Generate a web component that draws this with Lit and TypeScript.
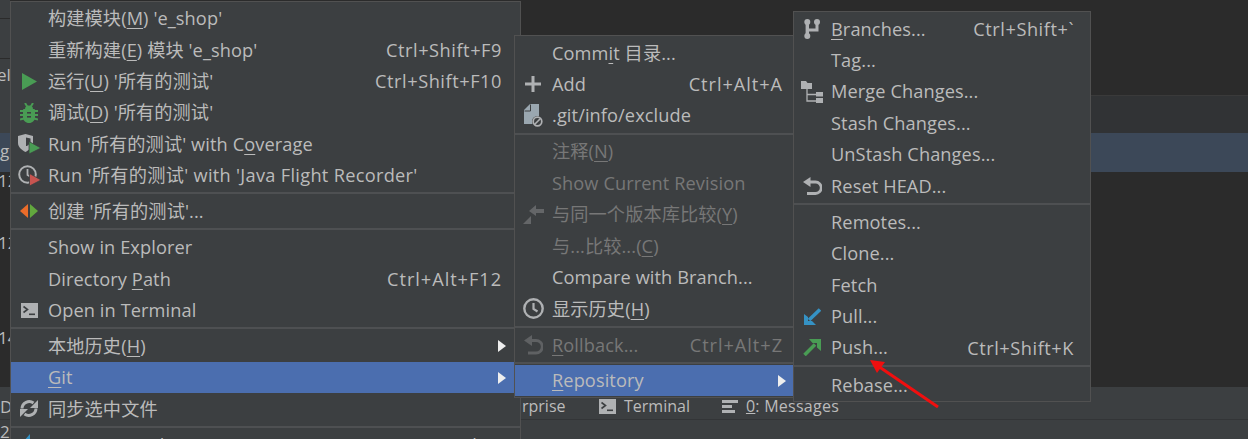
import { LitElement, html, css, svg } from "lit";
import { customElement } from "lit/decorators.js";

const G = "#afb1b3";
const D = "#3c3f41";

const ic: Record<string, [number, number, any]> = {
  run: [15, 17, svg`<path d="M0 0 L15 8.500 L0 17Z" fill="#499c54"/>`],
  bug: [18, 20, svg`<g stroke="#499c54" stroke-width="2" fill="none"><path d="M5 0l2.500 4M13 0l-2.500 4M0 8h18M0 12h18M0 16.500l4-1M18 16.500l-4-1"/></g><path d="M5 6a4 3.500 0 0 1 8 0z" fill="#499c54"/><rect x="3" y="6" width="12" height="10" rx="1" fill="#499c54"/><path d="M3 14h12c0 3.500-2.500 6-6 6s-6-2.500-6-6z" fill="#499c54"/><rect x="7" y="9" width="4" height="1.600" fill="${D}"/><rect x="7" y="13" width="4" height="1.600" fill="${D}"/>`],
  cov: [23, 20, svg`<path d="M0 2 L7.500 0 L15 2 V9 C15 13 11 16 7.500 18 C3.500 16 0 13 0 9Z" fill="${G}"/><path d="M8 3.500 L12.500 4.500 V9 L9 12 H8Z" fill="${D}"/><path d="M11 7.500 L23 14 L11 20Z" fill="#499c54" stroke="${D}" stroke-width=".8"/>`],
  jfr: [23, 21, svg`<circle cx="9.500" cy="9.500" r="8.300" fill="none" stroke="${G}" stroke-width="2"/><path d="M9.500 4v6l3.500 2" fill="none" stroke="${G}" stroke-width="1.800"/><path d="M11.500 8.500 L23 15 L11.500 21Z" fill="#c75450" stroke="${D}" stroke-width=".8"/>`],
  create: [18, 14, svg`<path d="M8 0 V14 L0 7Z" fill="#eb6c2a"/><path d="M10 0 V14 L18 7Z" fill="#62a83e"/>`],
  term: [17, 15, svg`<rect width="17" height="15" fill="${G}"/><path d="M2.500 3.500l4 3-4 3" fill="none" stroke="${D}" stroke-width="1.600"/><rect x="8" y="10.500" width="6" height="1.600" fill="${D}"/>`],
  sync: [18, 19, svg`<g fill="none" stroke="${G}" stroke-width="3"><path d="M2 9.500A7.200 7.200 0 0 1 13.500 4"/><path d="M16 9.500A7.200 7.200 0 0 1 4.500 15"/></g><path d="M18 1v8h-8z M0 18V10h8z" fill="${G}"/>`],
  plus: [16, 16, svg`<path d="M6.500 0h3v6.500H16v3H9.500V16h-3V9.500H0v-3h6.500z" fill="${G}"/>`],
  ignore: [19, 23, svg`<path d="M0 6L6 0H15V20H0Z" fill="#9aa7b0"/><path d="M6.500 0.500V7H0.500" fill="none" stroke="${D}" stroke-width="1"/><circle cx="13.500" cy="17.500" r="5.500" fill="${D}"/><circle cx="13.500" cy="17.500" r="4.300" fill="none" stroke="${G}" stroke-width="1.700"/><path d="M10.500 20.500l6-6" stroke="${G}" stroke-width="1.600"/>`],
  compare: [21, 19, svg`<g fill="#646668"><path d="M13 0 L6 6 L13 11 V8 H21 V4 H13Z"/><path d="M2 17 L8 11 V19 H0Z"/></g>`],
  clock: [21, 21, svg`<circle cx="10.500" cy="10.500" r="9.200" fill="none" stroke="${G}" stroke-width="2.400"/><path d="M10.500 5v6l4 2.500" fill="none" stroke="${G}" stroke-width="2.200"/>`],
  undoDis: [19, 20, svg`<path d="M6 5.500H12A6.200 6.200 0 0 1 12 18H4" fill="none" stroke="#5f6163" stroke-width="2.800"/><path d="M8 0V11L0 5.500z" fill="#5f6163"/>`],
  undo: [19, 18, svg`<path d="M6 5H12.500A5.300 5.300 0 0 1 12.500 16.500H4" fill="none" stroke="${G}" stroke-width="2.800"/><path d="M7.500 0V10L0 5z" fill="${G}"/>`],
  branch: [16, 20, svg`<g fill="${G}"><circle cx="3.300" cy="3" r="3"/><circle cx="3.300" cy="17" r="3"/><circle cx="13" cy="3" r="3"/><rect x="1.600" y="3" width="3.400" height="14"/><path d="M3 9.500h8.500V4h3v8.500H3z"/></g>`],
  merge: [22, 22, svg`<g fill="${G}"><path d="M0 0h5l1.500 2H11v6H0z"/><rect x="15" y="11" width="7" height="4.500"/><rect x="15" y="17" width="7" height="5"/></g><path d="M6 8V20H15M6 13.500H15" fill="none" stroke="${G}" stroke-width="1.300"/>`],
  pull: [17, 17, svg`<path d="M16 1.500L5 12" stroke="#3592c4" stroke-width="3.600"/><path d="M0 6 L4 9 V13 H8 L12 17 H0Z" fill="#3592c4"/>`],
  push: [18, 17, svg`<path d="M1.500 16L12 5.500" stroke="#499c54" stroke-width="3.600"/><path d="M6 0 H18 V12 L14 8.500 V4 H9.500Z" fill="#499c54"/>`],
  list: [16, 13, svg`<rect width="16" height="3" fill="${G}"/><rect y="5" width="10" height="3" fill="${G}"/><rect y="10" width="13" height="3" fill="${G}"/>`],
  cmp: [16, 22, svg`<path d="M9 0 V8 H2Z" fill="#3592c4"/>`],
};

const icon = (n: string) => {
  const [w, h, body] = ic[n];
  return html`<svg class="ic" width=${w} height=${h} viewBox="0 0 ${w} ${h}">${body}</svg>`;
};

type Item = { t?: any; k?: string; i?: string; sub?: boolean; dis?: boolean; sel?: boolean; sep?: boolean; tall?: boolean; wide?: boolean };
const u = (s: string) => html`<u>${s}</u>`;

const m1: Item[] = [
  { t: html`构建模块(${u("M")}) 'e_shop'` },
  { t: html`重新构建(${u("E")}) 模块 'e_shop'`, k: "Ctrl+Shift+F9" },
  { t: html`运行(${u("U")}) '所有的测试'`, k: "Ctrl+Shift+F10", i: "run" },
  { t: html`调试(${u("D")}) '所有的测试'`, i: "bug" },
  { t: html`Run '所有的测试' with C${u("o")}verage`, i: "cov" },
  { t: html`Run '所有的测试' with 'Java Flight Recorder'`, i: "jfr", wide: true },
  { sep: true },
  { t: html`创建 '所有的测试'...`, i: "create" },
  { sep: true },
  { t: "Show in Explorer" },
  { t: html`Directory ${u("P")}ath`, k: "Ctrl+Alt+F12" },
  { t: "Open in Terminal", i: "term" },
  { sep: true },
  { t: html`本地历史(${u("H")})`, sub: true },
  { t: html`${u("G")}it`, sub: true, sel: true },
  { t: "同步选中文件", i: "sync" },
  { sep: true },
  { t: "Compare With...", k: "Ctrl+D", i: "cmp" },
];
const m2: Item[] = [
  { t: html`Comm${u("i")}t 目录...` },
  { t: "Add", k: "Ctrl+Alt+A", i: "plus" },
  { t: ".git/info/exclude", i: "ignore" },
  { sep: true },
  { t: html`注释(${u("N")})`, dis: true },
  { t: "Show Current Revision", dis: true },
  { t: html`与同一个版本库比较(${u("Y")})`, dis: true, i: "compare" },
  { t: html`与...比较...(${u("C")})`, dis: true },
  { t: "Compare with Branch..." },
  { t: html`显示历史(${u("H")})`, i: "clock" },
  { sep: true },
  { t: html`${u("R")}ollback...`, k: "Ctrl+Alt+Z", dis: true, i: "undoDis" },
  { sep: true },
  { t: html`${u("R")}epository`, sub: true, sel: true },
];
const m3: Item[] = [
  { t: html`${u("B")}ranches...`, k: "Ctrl+Shift+\`", i: "branch" },
  { t: "Tag..." },
  { t: "Merge Changes...", i: "merge" },
  { t: "Stash Changes..." },
  { t: "UnStash Changes..." },
  { t: "Reset HEAD...", i: "undo" },
  { sep: true },
  { t: "Remotes..." },
  { t: "Clone..." },
  { t: "Fetch" },
  { t: "Pull...", i: "pull" },
  { t: "Push...", k: "Ctrl+Shift+K", i: "push" },
  { sep: true, tall: true },
  { t: "Rebase..." },
];

@customElement("app-root")
export class AppRoot extends LitElement {
  static styles = css`
    :host { display: block; position: relative; width: 1248px; height: 439px; overflow: hidden; background: #2b2b2b;
      font-family: "Open Sans", "Noto Sans CJK SC", sans-serif; color: #bbb; font-size: 18.200px; letter-spacing: .1px; }
    .bg { display: flex; flex-direction: column; height: 439px; }
    .b1 { height: 95px; background: #2b2b2b; border-bottom: 1px solid #3a3a3a; flex: none; }
    .b2 { height: 37px; background: #313335; flex: none; }
    .b3 { height: 39px; background: #3c4858; flex: none; }
    .b4 { flex: 1; background: #2b2b2b; }
    .b5 { height: 33px; background: #3c3f41; border-bottom: 1px solid #333537; flex: none; display: flex; align-items: center;
      font-size: 16px; padding: 6px 0 0 522px; box-sizing: border-box; letter-spacing: 0; }
    .b6 { height: 19px; background: #3c3f41; flex: none; }
    .tool { display: flex; align-items: center; gap: 8px; }
    .t1 { width: 77px; }
    .t2 { margin-right: 32px; }
    .msg { letter-spacing: .25px; }
    .strip { position: absolute; left: 0; top: 0; width: 10px; height: 439px; overflow: hidden; font-size: 17px;
      display: flex; flex-direction: column; letter-spacing: 0; line-height: 20px; }
    .s { flex: none; box-sizing: border-box; overflow: hidden; white-space: nowrap; }
    .s1 { height: 19px; background: #3c3f41; border-bottom: 1px solid #2b2b2b; }
    .s2 { height: 40px; background: #3c3f41; border-bottom: 1px solid #2b2b2b; }
    .s3 { height: 74px; background: #3c3f41; padding-top: 6px; }
    .s4 { height: 39px; background: #3c4858; padding-top: 8px; }
    .s5 { height: 215px; background: #2b2b2b; }
    .s5 span { display: block; height: 20px; margin-left: -2px; }
    .s5 .n1 { margin-top: -1px; }
    .s5 .n2 { margin-top: 42px; }
    .s5 .n3 { margin-top: 75px; }
    .s6 { height: 33px; background: #3c3f41; border-bottom: 1px solid #333537; padding-top: 10px; }
    .s7 { flex: 1; background: #3c3f41; padding-top: 2px; }
    .el { margin-left: -3px; display: block; }
    .menu { position: absolute; box-sizing: border-box; background: #3c3f41; border: 1px solid #515151; padding: 1px 0; }
    .row { height: 31.440px; display: flex; align-items: center; position: relative; padding-left: 37px; white-space: nowrap; line-height: 1; }
    .row u { text-underline-offset: 3px; text-decoration-thickness: 1px; }
    .row.dis { color: #777; }
    .row.sel { background: #4b6eaf; }
    .wide { letter-spacing: .3px; }
    .key { position: absolute; top: 50%; transform: translateY(-50%); letter-spacing: .55px; }
    .key.alt { letter-spacing: .95px; }
    .icw { position: absolute; left: 4px; top: 50%; transform: translateY(-50%); width: 28px; height: 24px;
      display: flex; align-items: center; justify-content: center; }
    .ic { display: block; flex: none; }
    .arr { position: absolute; top: 50%; transform: translateY(-50%); width: 0; height: 0;
      border-left: 8px solid #eee; border-top: 6px solid transparent; border-bottom: 6px solid transparent; }
    .sep { height: 4.500px; display: flex; align-items: center; }
    .sep.tall { height: 6px; }
    .sep::after { content: ""; flex: 1; height: 2px; background: #4e5052; }
    .red { position: absolute; left: 0; top: 0; pointer-events: none; z-index: 4; }
    .m1 { left: 10px; top: .5px; width: 511px; z-index: 1; }
    .m2 { left: 514px; top: 35px; width: 281px; z-index: 2; }
    .m3 { left: 793px; top: 11px; width: 298px; z-index: 3; padding-bottom: 0; }
  `;

  private menu(cls: string, items: Item[], keyRight: number, arrRight: number) {
    return html`<div class="menu ${cls}">
      ${items.map((it) =>
        it.sep
          ? html`<div class="sep ${it.tall ? "tall" : ""}"></div>`
          : html`<div class="row ${it.dis ? "dis" : ""} ${it.sel ? "sel" : ""}">
              ${it.i ? html`<span class="icw">${icon(it.i)}</span>` : ""}
              <span class=${it.wide ? "wide" : ""}>${it.t}</span>
              ${it.k ? html`<span class="key ${it.k.includes("Alt") ? "alt" : ""}" style="right:${keyRight}px">${it.k}</span>` : ""}
              ${it.sub ? html`<span class="arr" style="right:${arrRight}px"></span>` : ""}
            </div>`
      )}
    </div>`;
  }

  render() {
    return html`
      <div class="bg">
        <div class="b1"></div><div class="b2"></div><div class="b3"></div><div class="b4"></div>
        <div class="b5">
          <span class="t1">rprise</span>
          <span class="tool t2">${icon("term")}<span>Terminal</span></span>
          <span class="tool">${icon("list")}<span class="msg"><u>0</u>: Messages</span></span>
        </div>
        <div class="b6"></div>
      </div>
      <div class="strip">
        <div class="s s1"></div>
        <div class="s s2"></div>
        <div class="s s3"><span class="el">el</span></div>
        <div class="s s4">g</div>
        <div class="s s5"><span class="n1">12</span><span class="n2">12</span><span class="n3">14</span></div>
        <div class="s s6">D</div>
        <div class="s s7">2</div>
      </div>
      ${this.menu("m1", m1, 18, 14)}
      ${this.menu("m2", m2, 11, 8)}
      ${this.menu("m3", m3, 16, 8)}
      <svg class="red" width="1248" height="439">
        <path d="M938 407 L878 366" stroke="#f00f0f" stroke-width="3"/>
        <path d="M870 360 L885 362 L877 373Z" fill="#f00f0f"/>
      </svg>
    `;
  }
}
